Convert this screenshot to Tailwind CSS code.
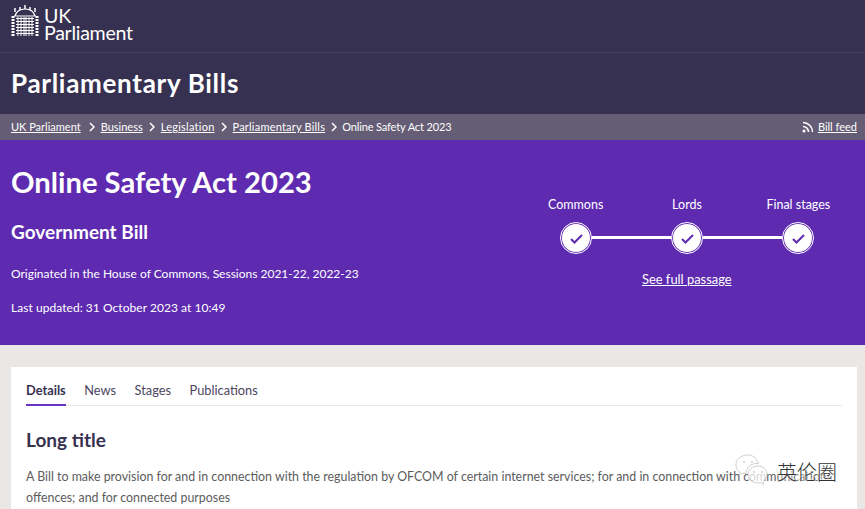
<!DOCTYPE html>
<html lang="en">
<head>
    <meta charset="UTF-8">
    <meta name="viewport" content="width=device-width, initial-scale=1.0">
    <title>Online Safety Act 2023</title>
    <script src="https://cdn.jsdelivr.net/npm/@tailwindcss/browser@4"></script>
</head>
<body class="h-[509px] overflow-hidden bg-[#e9e8e6] font-['Lato',sans-serif]">
    <header class="bg-[#373151] text-white">
        <div class="h-[53px] border-b border-[#484261] pl-[11px] pt-[5px] flex gap-[5px]">
            <svg class="w-[28px] h-[33px]" viewBox="0 0 28 33" fill="none" stroke="#fff">
                <!-- portcullis -->
                <path d="M5 13.500h18M5 16.500h18M5 19.500h18M5 22.500h18M5 25.500h18M5 28.500h18M7 12v19M10 12v19M13 12v19M15 12v19M18 12v19M21 12v19" stroke-width="1"/>
                <path d="M4 11q2-7 10-7t10 7M3 11h22" stroke-width="1.200"/>
                <path d="M4 7V3M9 5V2M14 4V0M19 5V2M24 7V3" stroke-width="1.500"/>
                <path d="M2 11v21M26 11v21" stroke-width="3" stroke-dasharray="2 1"/>
            </svg>
            <div class="pt-[3px]">
                <div class="text-[19.600px] leading-[16px] tracking-[-0.2px]">UK</div>
                <div class="text-[19.600px] leading-[17px] tracking-[-0.3px]">Parliament</div>
            </div>
        </div>
        <div class="h-[61px] pl-[11px] pt-[12px] text-[26px] leading-[36px] font-bold tracking-[0.7px]">Parliamentary Bills</div>
    </header>

    <nav class="h-[26px] bg-[#655d75] text-white text-[11px] flex items-center justify-between pl-[11px] pr-[8px]">
        <div class="flex items-center">
            <a class="underline" href="#">UK Parliament</a>
            <svg class="w-[6px] h-[10px] ml-[8px] mr-[6px]" viewBox="0 0 6 10" fill="none" stroke="#fff" stroke-width="1.500"><path d="M1 1l4 4-4 4"/></svg>
            <a class="underline" href="#">Business</a>
            <svg class="w-[6px] h-[10px] mx-[6px]" viewBox="0 0 6 10" fill="none" stroke="#fff" stroke-width="1.500"><path d="M1 1l4 4-4 4"/></svg>
            <a class="underline tracking-[0.25px]" href="#">Legislation</a>
            <svg class="w-[6px] h-[10px] mx-[6px]" viewBox="0 0 6 10" fill="none" stroke="#fff" stroke-width="1.500"><path d="M1 1l4 4-4 4"/></svg>
            <a class="underline tracking-[0.2px]" href="#">Parliamentary Bills</a>
            <svg class="w-[6px] h-[10px] mx-[5.500px]" viewBox="0 0 6 10" fill="none" stroke="#fff" stroke-width="1.500"><path d="M1 1l4 4-4 4"/></svg>
            <span class="tracking-[-0.13px]">Online Safety Act 2023</span>
        </div>
        <div class="flex items-center gap-[4px]">
            <svg class="w-[12px] h-[12px]" viewBox="0 0 12 12" fill="none" stroke="#fff" stroke-width="1.500"><circle cx="2" cy="10" r="1.500" fill="#fff" stroke="none"/><path d="M1 5.500a5.500 5.500 0 0 1 5.500 5.500M1 1.500a9.500 9.500 0 0 1 9.500 9.500"/></svg>
            <a class="underline" href="#">Bill feed</a>
        </div>
    </nav>

    <section class="h-[205px] bg-[#5e2bb0] text-white pl-[11px] flex justify-between">
        <div>
            <h1 class="mt-[22px] text-[29.200px] leading-[40px] font-bold">Online Safety Act 2023</h1>
            <h2 class="mt-[18px] text-[19px] leading-[24px] font-bold">Government Bill</h2>
            <p class="mt-[21px] text-[12px] leading-[18px]">Originated in the House of Commons, Sessions 2021-22, 2022-23</p>
            <p class="mt-[16px] text-[12px] leading-[18px] tracking-[0.05px]">Last updated: 31 October 2023 at 10:49</p>
        </div>
        <div class="w-[335px] shrink-0 pt-[56px] flex flex-col">
            <div class="grid grid-cols-3 w-[334px] -ml-[10px] text-[12.500px] leading-[18px] text-center">
                <span>Commons</span>
                <span>Lords</span>
                <span>Final stages</span>
            </div>
            <div class="relative mt-[8px] ml-[30px] w-[254px] flex justify-between items-center">
                <div class="absolute left-0 right-0 top-[14px] h-[3px] bg-white"></div>
                <div class="relative w-[32px] h-[32px] rounded-full bg-white border-2 border-[#5e2bb0] outline outline-[1.500px] -outline-offset-[1.500px] outline-white flex items-center justify-center">
                    <svg class="w-[13px] h-[11px]" viewBox="0 0 13 11" fill="none" stroke="#5e2bb0" stroke-width="2"><path d="M1 6l3.500 3.500L12 2"/></svg>
                </div>
                <div class="relative w-[32px] h-[32px] rounded-full bg-white border-2 border-[#5e2bb0] outline outline-[1.500px] -outline-offset-[1.500px] outline-white flex items-center justify-center">
                    <svg class="w-[13px] h-[11px]" viewBox="0 0 13 11" fill="none" stroke="#5e2bb0" stroke-width="2"><path d="M1 6l3.500 3.500L12 2"/></svg>
                </div>
                <div class="relative w-[32px] h-[32px] rounded-full bg-white border-2 border-[#5e2bb0] outline outline-[1.500px] -outline-offset-[1.500px] outline-white flex items-center justify-center">
                    <svg class="w-[13px] h-[11px]" viewBox="0 0 13 11" fill="none" stroke="#5e2bb0" stroke-width="2"><path d="M1 6l3.500 3.500L12 2"/></svg>
                </div>
            </div>
            <a class="mt-[16px] ml-[112px] text-[12.900px] leading-[18px] underline" href="#">See full passage</a>
        </div>
    </section>

    <main class="relative mt-[22px] ml-[11px] mr-[8px] h-[142px] bg-white px-[15px] overflow-hidden">
        <div class="flex gap-[18.500px] h-[39px] border-b border-[#e9e8e6] text-[12.800px] text-[#4b4560]">
            <span class="h-[39px] pt-[14px] leading-[18px] font-bold text-[#373151] border-b-2 border-[#6b35c4]">Details</span>
            <span class="pt-[14px] leading-[18px]">News</span>
            <span class="pt-[14px] leading-[18px]">Stages</span>
            <span class="pt-[14px] leading-[18px]">Publications</span>
        </div>
        <h3 class="mt-[21px] text-[19px] leading-[26px] font-bold text-[#373151]">Long title</h3>
        <p class="mt-[13px] w-[815px] text-[12.400px] leading-[21px] text-[#5c5c5c]">A Bill to make provision for and in connection with the regulation by OFCOM of certain internet services; for and in connection with communications offences; and for connected purposes</p>
        <!-- watermark -->
        <div class="absolute left-[723px] top-[87px] w-[108px] h-[34px] flex items-start">
            <svg class="w-[36px] h-[32px] shrink-0" viewBox="0 0 36 32" fill="#fff" fill-opacity="0.75" stroke="#bbb" stroke-width="0.700">
                <path d="M14 1c-7 0-12 4-12 10 0 3 1.500 5.500 4 7l-1 3 4-2 3 .5c0-6 5-10 11-10 .5 0 1 0 1.500.1C23 4.500 19 1 14 1z"/>
                <path d="M24 12c-6 0-10 4-10 8.500S18 29 24 29l3-.5 2.500 2-.5-3c2.500-1.500 4-4 4-7C33 16 29.500 12 24 12z"/>
                <circle cx="10" cy="8" r="1" fill="#bbb" stroke="none"/><circle cx="18" cy="8" r="1" fill="#bbb" stroke="none"/>
                <circle cx="20" cy="18" r="1" fill="#bbb" stroke="none"/><circle cx="28" cy="18" r="1" fill="#bbb" stroke="none"/>
            </svg>
            <span class="ml-[7px] mt-[6px] text-[20px] leading-[24px] font-light whitespace-nowrap font-['Noto_Sans_CJK_SC',sans-serif] text-[#333] [text-shadow:0_0_2px_#fff,0_0_3px_#fff,0_0_3px_#fff]">英伦圈</span>
        </div>
    </main>
</body>
</html>
